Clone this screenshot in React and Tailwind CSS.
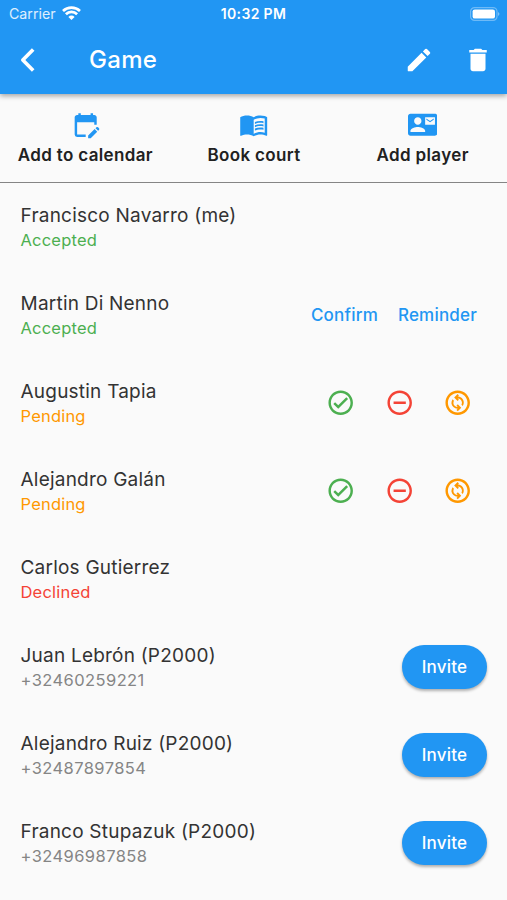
import React from 'react';
import {
  MdContactMail,
  MdDelete,
  MdMenuBook,
  MdOutlineChangeCircle,
  MdOutlineCheckCircle,
  MdOutlineRemoveCircleOutline,
} from 'react-icons/md';

const players = [
  { name: 'Francisco Navarro (me)', status: 'Accepted' },
  { name: 'Martin Di Nenno', status: 'Accepted', actions: 'links' },
  { name: 'Augustin Tapia', status: 'Pending', actions: 'icons' },
  { name: 'Alejandro Galán', status: 'Pending', actions: 'icons' },
  { name: 'Carlos Gutierrez', status: 'Declined' },
  { name: 'Juan Lebrón (P2000)', phone: '+32460259221', actions: 'invite' },
  { name: 'Alejandro Ruiz (P2000)', phone: '+32487897854', actions: 'invite' },
  { name: 'Franco Stupazuk (P2000)', phone: '+32496987858', actions: 'invite' },
];

const statusColors = {
  Accepted: 'text-[#4caf50]',
  Pending: 'text-[#ff9800]',
  Declined: 'text-[#f44336]',
};

function StatusBar() {
  return (
    <div className="grid h-[27px] grid-cols-3 items-center pr-[6px] pl-[9px]">
      <div className="flex items-center gap-[6px]">
        <span className="text-[14.2px] text-white/85">Carrier</span>
        <svg className="h-[14px] w-[19px]" viewBox="0 0 19 14" fill="none" stroke="white" strokeWidth="2.7">
          <path d="M1 4.9 A12.5 12.5 0 0 1 18 4.9" />
          <path d="M3.9 8.2 A8 8 0 0 1 15.1 8.2" />
          <path d="M6.4 10.9 A4.4 4.4 0 0 1 12.6 10.9 L9.5 14 Z" fill="white" stroke="none" />
        </svg>
      </div>
      <span className="pr-[3px] text-center text-[14px] font-semibold tracking-[0.35px]">10:32 PM</span>
      <svg className="h-[14px] w-[31px] justify-self-end" viewBox="0 0 31 14">
        <rect x="0.6" y="0.6" width="26.4" height="12.8" rx="4" fill="none" stroke="white" strokeOpacity="0.35" strokeWidth="1.2" />
        <rect x="2.6" y="2.4" width="22.4" height="9.2" rx="2.2" fill="white" />
        <path d="M28.2 5 Q30.6 7 28.2 9 Z" fill="white" fillOpacity="0.5" />
      </svg>
    </div>
  );
}

function BackIcon() {
  return (
    <svg className="h-[28px] w-[28px]" viewBox="0 0 28 28" fill="none" stroke="white" strokeWidth="3.6" strokeLinejoin="round">
      <path d="M19.2 3.4 L8.8 14 L19.2 24.6" />
    </svg>
  );
}

function PencilIcon() {
  return (
    <svg className="h-[30px] w-[30px]" viewBox="0 0 24 24" fill="currentColor">
      <path d="M3 17.46v3.04c0 .28.22.5.5.5h3.04c.13 0 .26-.05.35-.15L17.81 9.94l-3.75-3.75L3.15 17.1c-.1.1-.15.22-.15.36zM20.71 7.04a.996.996 0 0 0 0-1.41l-2.34-2.34a.996.996 0 0 0-1.41 0l-1.83 1.83 3.75 3.75 1.83-1.83z" />
    </svg>
  );
}

function EditCalendarIcon({ className }) {
  return (
    <svg className={className} viewBox="0 0 24 24" fill="currentColor">
      <path d="M12 22H5a2 2 0 0 1-2-2V6c0-1.1.9-2 2-2h1V2.6h2V4h8V2.6h2V4h1c1.1 0 2 .9 2 2v6h-2v-2H5v10h7v2z" />
      <path d="M22.13 16.99l.71-.71a.996.996 0 0 0 0-1.41l-.71-.71a.996.996 0 0 0-1.41 0l-.71.71 2.12 2.12zM21.42 17.7l-5.3 5.3H14v-2.12l5.3-5.3 2.12 2.12z" />
    </svg>
  );
}

function Header() {
  return (
    <header className="relative h-[94px] bg-[#2196f3] text-white shadow-[0_2px_5px_rgba(0,0,0,0.35)]">
      <StatusBar />
      <div className="flex h-[66px] items-center pr-[14px] pl-[14px]">
        <button>
          <BackIcon />
        </button>
        <h1 className="ml-[47px] text-[24px] font-medium tracking-[0.3px]">Game</h1>
        <button className="ml-auto">
          <PencilIcon />
        </button>
        <button className="ml-[29px]">
          <MdDelete className="h-[30px] w-[30px]" />
        </button>
      </div>
    </header>
  );
}

function Shortcut({ icon: Icon, label }) {
  return (
    <button className="flex flex-col items-center pt-[16px]">
      <Icon className="h-[29.4px] w-[29.4px] text-[#2196f3]" />
      <span className="mt-[4px] text-[17px] leading-6 font-semibold tracking-[0.35px] text-[#212121]">{label}</span>
    </button>
  );
}

function PlayerActions({ type }) {
  if (type === 'links') {
    return (
      <div className="flex gap-[20px] pt-[2px] pr-[30px] text-[17px] font-medium tracking-[0.2px] text-[#2196f3]">
        <button>Confirm</button>
        <button>Reminder</button>
      </div>
    );
  }
  if (type === 'icons') {
    return (
      <div className="flex gap-[29.2px] pr-[34.5px]">
        <button>
          <MdOutlineCheckCircle className="h-[29.4px] w-[29.4px] text-[#4caf50]" />
        </button>
        <button>
          <MdOutlineRemoveCircleOutline className="h-[29.4px] w-[29.4px] text-[#f44336]" />
        </button>
        <button>
          <MdOutlineChangeCircle className="h-[29.4px] w-[29.4px] text-[#ff9800]" />
        </button>
      </div>
    );
  }
  if (type === 'invite') {
    return (
      <button className="mr-[20px] h-[44px] w-[85px] rounded-full bg-[#2196f3] pt-px text-[17px] font-medium tracking-[0.2px] text-white shadow-[0_2px_3px_rgba(0,0,0,0.3)]">
        Invite
      </button>
    );
  }
  return null;
}

function PlayerRow({ player }) {
  return (
    <li className="flex h-[88px] items-center justify-between pl-[20.5px]">
      <div className="pt-px">
        <p className="text-[19px] leading-[26px] tracking-[0.22px] text-[#333333]">{player.name}</p>
        {player.status ? (
          <p className={`text-[16.5px] leading-[23px] tracking-[0.2px] ${statusColors[player.status]}`}>{player.status}</p>
        ) : (
          <p className="text-[16.5px] leading-[23px] tracking-[0.42px] text-[#858585]">{player.phone}</p>
        )}
      </div>
      <PlayerActions type={player.actions} />
    </li>
  );
}

export default function App() {
  return (
    <div className="h-[900px] w-[507px] overflow-hidden bg-[#fafafa] font-['Inter','Liberation_Sans',sans-serif]">
      <Header />
      <nav className="grid h-[89px] grid-cols-3 border-b border-[#858585] pl-px">
        <Shortcut icon={EditCalendarIcon} label="Add to calendar" />
        <Shortcut icon={MdMenuBook} label="Book court" />
        <Shortcut icon={MdContactMail} label="Add player" />
      </nav>
      <ul>
        {players.map((player) => (
          <PlayerRow key={player.name} player={player} />
        ))}
      </ul>
    </div>
  );
}
